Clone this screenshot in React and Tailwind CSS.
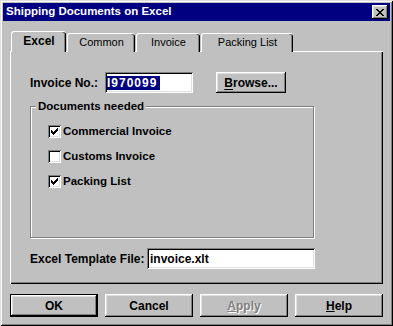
const raised =
  "shadow-[inset_-1px_-1px_#000,inset_1px_1px_#fff,inset_-2px_-2px_#808080,inset_2px_2px_#dfdfdf]";
const sunken =
  "shadow-[inset_1px_1px_#808080,inset_-1px_-1px_#fff,inset_2px_2px_#000,inset_-2px_-2px_#dfdfdf]";

function CloseGlyph() {
  return (
    <svg width="8" height="7" viewBox="0 0 8 7" shapeRendering="crispEdges">
      <path
        fill="#000"
        d="M0 0h2v1h-2zM6 0h2v1h-2zM1 1h2v1h-2zM5 1h2v1h-2zM2 2h4v1h-4zM3 3h2v1h-2zM2 4h4v1h-4zM1 5h2v1h-2zM5 5h2v1h-2zM0 6h2v1h-2zM6 6h2v1h-2z"
      />
    </svg>
  );
}

function CheckGlyph() {
  return (
    <svg width="7" height="7" viewBox="0 0 7 7" shapeRendering="crispEdges">
      <path
        fill="#000"
        d="M6 0h1v1h-1zM5 1h2v1h-2zM0 2h1v1h-1zM4 2h3v1h-3zM0 3h2v1h-2zM3 3h3v1h-3zM0 4h5v1h-5zM1 5h3v1h-3zM2 6h1v1h-1z"
      />
    </svg>
  );
}

function Check({ checked, label }) {
  return (
    <div className="flex items-center h-[17px]">
      <span className={`w-[13px] h-[13px] bg-white flex items-center justify-center ${sunken}`}>
        {checked && <CheckGlyph />}
      </span>
      <span className="ml-[2px] text-[11.5px] font-bold">{label}</span>
    </div>
  );
}

function Tab({ active, width, children }) {
  if (active) {
    return (
      <div
        className={`relative z-10 ml-[1px] h-[21px] ${width} bg-[#c0c0c0] border-l border-t border-white rounded-t-[3px] shadow-[inset_-1px_0_#000,inset_-2px_0_#808080] flex items-center justify-center pb-[2px] text-[12px] font-bold`}
      >
        {children}
      </div>
    );
  }
  return (
    <div
      className={`ml-[1px] h-[19px] ${width} bg-[#c0c0c0] border-l border-t border-white rounded-t-[3px] shadow-[inset_-1px_0_#000,inset_-2px_0_#808080] flex items-center justify-center pb-[1px] text-[11px]`}
    >
      {children}
    </div>
  );
}

export default function App() {
  return (
    <div
      className={`w-[393px] h-[326px] bg-[#c0c0c0] p-[3px] text-black [font-family:'Liberation_Sans',Arial,sans-serif] shadow-[inset_1px_1px_#dfdfdf,inset_-1px_-1px_#000,inset_2px_2px_#fff,inset_-2px_-2px_#808080]`}
    >
      {/* title bar */}
      <div className="h-[18px] bg-[#000080] flex items-center justify-between pl-[3px] pr-[2px]">
        <span className="text-white text-[11.5px] font-bold leading-none">
          Shipping Documents on Excel
        </span>
        <div className={`w-[16px] h-[14px] bg-[#c0c0c0] flex items-center justify-center ${raised}`}>
          <CloseGlyph />
        </div>
      </div>

      <div className="px-[7px] pt-[10px]">
        {/* tabs */}
        <div className="flex items-end h-[21px]">
          <Tab active width="w-[55px]">Excel</Tab>
          <Tab width="w-[68px]">Common</Tab>
          <Tab width="w-[64px]">Invoice</Tab>
          <Tab width="w-[92px]">Packing List</Tab>
        </div>

        {/* tab panel */}
        <div className="-mt-[1px] h-[233px] bg-[#c0c0c0] pt-[21px] pl-[20px] shadow-[inset_1px_1px_#fff,inset_-1px_-1px_#000,inset_-2px_-2px_#808080]">
          <div className="flex items-center h-[21px]">
            <span className="w-[75px] text-[12px] font-bold">Invoice No.:</span>
            <div className={`w-[88px] h-[21px] bg-white flex items-center pl-[2px] ${sunken}`}>
              <span className="bg-[#000080] text-white text-[12px] font-bold leading-[14px] tracking-[1px] pr-[3px]">
                I970099
              </span>
            </div>
            <div className={`ml-[23px] w-[70px] h-[21px] flex items-center justify-center text-[12px] font-bold ${raised}`}>
              <span>
                <u className="underline-offset-[2px]">B</u>rowse...
              </span>
            </div>
          </div>

          <fieldset className="mt-[6px] w-[284px] h-[139px] border border-[#808080] shadow-[inset_1px_1px_#fff,1px_1px_#fff] pl-[17px] pt-[10px] min-w-0">
            <legend className="-ml-[12px] px-[2px] bg-[#c0c0c0] text-[11.5px] font-bold leading-[14px]">
              Documents needed
            </legend>
            <div className="flex flex-col gap-[8px]">
              <Check checked label="Commercial Invoice" />
              <Check label="Customs Invoice" />
              <Check checked label="Packing List" />
            </div>
          </fieldset>

          <div className="flex items-center h-[21px] mt-[10px]">
            <span className="w-[117px] text-[12px] font-bold">Excel Template File:</span>
            <div className={`w-[168px] h-[21px] bg-white flex items-center pl-[3px] text-[12px] font-bold ${sunken}`}>
              invoice.xlt
            </div>
          </div>
        </div>

        {/* buttons */}
        <div className="flex justify-between mt-[10px] text-[12px] font-bold">
          <div className="w-[88px] h-[23px] border border-black">
            <div className={`w-full h-full flex items-center justify-center ${raised}`}>OK</div>
          </div>
          <div className={`w-[88px] h-[23px] flex items-center justify-center ${raised}`}>Cancel</div>
          <div
            className={`w-[88px] h-[23px] flex items-center justify-center text-[#808080] [text-shadow:1px_1px_#fff] ${raised}`}
          >
            <span>
              <u>A</u>pply
            </span>
          </div>
          <div className={`w-[88px] h-[23px] flex items-center justify-center ${raised}`}>
            <span>
              <u>H</u>elp
            </span>
          </div>
        </div>
      </div>
    </div>
  );
}
